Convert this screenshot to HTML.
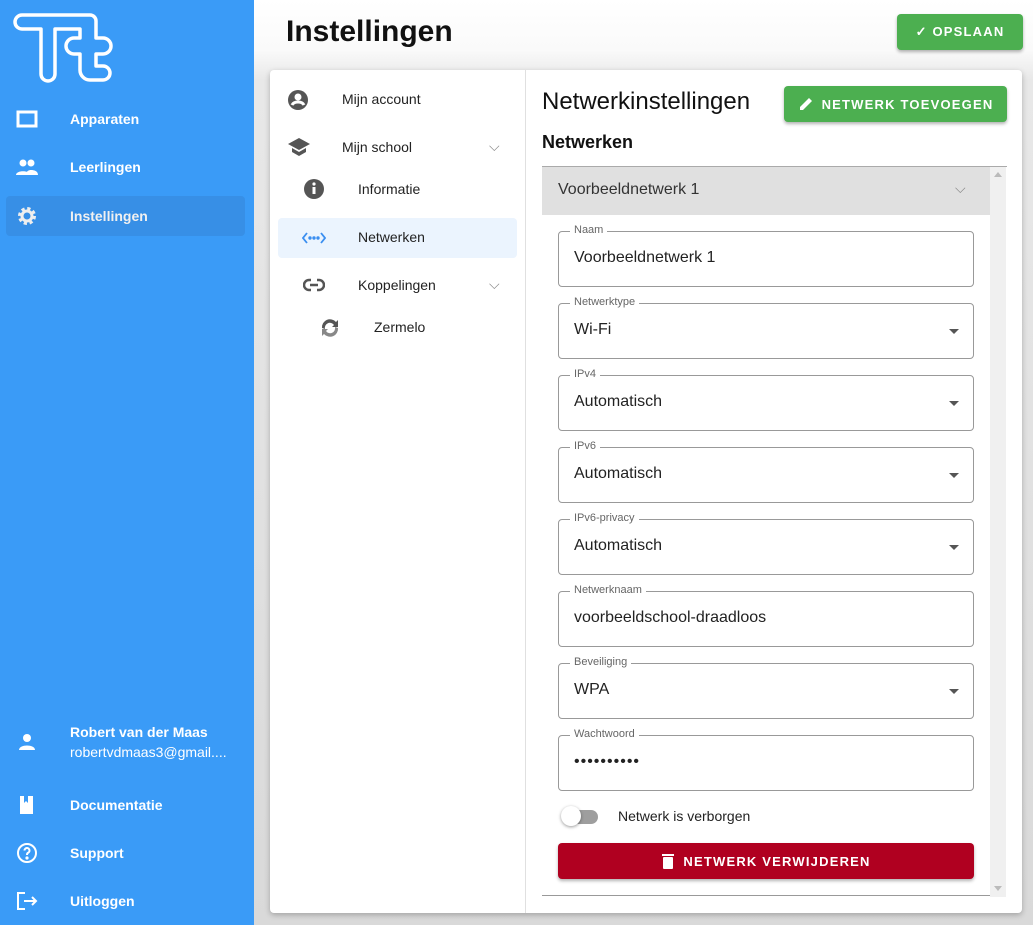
<!DOCTYPE html>
<html><head><meta charset="utf-8"><style>
*{box-sizing:border-box;margin:0;padding:0}
body{width:1033px;height:925px;overflow:hidden;font-family:"Liberation Sans",Roboto,sans-serif;background:#d9d9d9;position:relative}
.abs{position:absolute}
#side{left:0;top:0;width:254px;height:925px;background:#3a9bf7;color:#fff}
.nav{position:absolute;left:0;width:254px;height:40px;font-size:14px;font-weight:bold}
.nav span{position:absolute;left:70px;top:12px}
.nav svg{position:absolute;left:15px;top:8px}
#main{left:254px;top:0;width:779px;height:925px;background:linear-gradient(#fff 0,#fafafa 50px,#e8e8e8 80px,#d9d9d9 100%)}
h1{position:absolute;left:286px;top:15px;font-size:30px;font-weight:bold;color:#111}
.btn{position:absolute;background:#4caf50;color:#fff;font-weight:bold;font-size:13px;letter-spacing:1.2px;border-radius:4px;box-shadow:0 2px 3px rgba(0,0,0,.3);display:flex;align-items:center;justify-content:center;gap:8px}
#card{left:270px;top:70px;width:752px;height:843px;background:#fff;border-radius:4px;box-shadow:0 2px 6px rgba(0,0,0,.25)}
.mi{position:absolute;font-size:14px;color:#222}
.field{position:absolute;left:558px;width:416px;height:56px;border:1px solid #999;border-radius:4px}
.field label{position:absolute;left:11px;top:-8px;background:#fff;padding:0 4px;font-size:11px;color:#666}
.field div{position:absolute;left:15px;top:17px;font-size:16px;color:#222}
.field i{position:absolute;right:14px;top:25px;border-left:5px solid transparent;border-right:5px solid transparent;border-top:5px solid #555}
</style></head><body>
<div id="side" class="abs">
<svg class="abs" style="left:0;top:0" width="120" height="90" viewBox="0 0 120 90" fill="none" stroke="#fff" stroke-width="3.5" stroke-linejoin="round"><path d="M22 15H90a6 6 0 0 1 6 6V38H103a8 8 0 0 1 0 16H96V66H103a7 7 0 0 1 0 14H90a10 10 0 0 1-10-10V54H74a8 8 0 0 1 0-16H80V29H55V74a7 7 0 0 1-14 0V29H22a7 7 0 0 1 0-14Z"/></svg>
<div class="nav" style="top:99px"><svg width="24" height="24"><rect x="3" y="5" width="18" height="14" fill="none" stroke="#fff" stroke-width="3"/></svg><span>Apparaten</span></div>
<div class="nav" style="top:147px"><svg width="24" height="24" fill="#fff"><circle cx="8" cy="8" r="3.5"/><circle cx="16" cy="8" r="3.5"/><path d="M1 20c0-5 14-5 14 0zM11 20c0-4 3-5 5-5 3 0 7 1 7 5z"/></svg><span>Leerlingen</span></div>
<div class="nav" style="top:196px;left:6px;width:239px;background:#378fe6;border-radius:4px"><svg width="24" height="24" style="left:9px"><circle cx="12" cy="12" r="7" fill="none" stroke="#eee" stroke-width="4" stroke-dasharray="3 2.5"/><circle cx="12" cy="12" r="5" fill="none" stroke="#eee" stroke-width="3"/></svg><span style="left:64px;color:#f0f0f0">Instellingen</span></div>
<div class="nav" style="top:720px;height:50px"><svg width="24" height="24" style="top:10px" fill="#fff"><circle cx="12" cy="8" r="4"/><path d="M4 20c0-6 16-6 16 0z"/></svg><span style="top:4px">Robert van der Maas</span><span style="top:24px;font-weight:normal">robertvdmaas3@gmail....</span></div>
<div class="nav" style="top:785px"><svg width="24" height="24" fill="#fff"><path d="M5 3h13v18H5z"/><path d="M9 3h4v7l-2-2-2 2z" fill="#3a9bf7"/></svg><span>Documentatie</span></div>
<div class="nav" style="top:833px"><svg width="24" height="24" fill="none" stroke="#fff" stroke-width="2"><circle cx="12" cy="12" r="9"/><path d="M9.5 9.5a2.5 2.5 0 1 1 3.5 2.3c-1 .5-1 1-1 2.2"/><circle cx="12" cy="17" r=".6" fill="#fff"/></svg><span>Support</span></div>
<div class="nav" style="top:881px"><svg width="24" height="24" fill="none" stroke="#fff" stroke-width="2"><path d="M10 4H3v16h7M9 12h12M17 8l4 4-4 4"/></svg><span>Uitloggen</span></div>
</div>
<div id="main" class="abs"></div>
<h1>Instellingen</h1>
<div class="btn" style="left:897px;top:14px;width:126px;height:36px">✓ OPSLAAN</div>
<div id="card" class="abs"></div>
<div class="abs" style="left:525px;top:70px;width:1px;height:843px;background:#e0e0e0"></div>
<svg class="abs" style="left:286px;top:88px" width="24" height="24"><circle cx="12" cy="12" r="10" fill="#555"/><circle cx="12" cy="9" r="3.5" fill="#fff"/><path d="M6 17c2-4 10-4 12 0" stroke="#fff" stroke-width="3" fill="none"/></svg>
<div class="mi" style="left:342px;top:91px">Mijn account</div>
<svg class="abs" style="left:287px;top:137px" width="24" height="20" fill="#555"><path d="M1 7l11-6 11 6-11 6z"/><path d="M5 11v4l7 4 7-4v-4l-7 4z"/></svg>
<div class="mi" style="left:342px;top:139px">Mijn school</div>
<div class="mi" style="left:489px;top:138px;color:#888">⌵</div>
<svg class="abs" style="left:303px;top:178px" width="22" height="22"><circle cx="11" cy="11" r="10" fill="#555"/><rect x="9.5" y="9" width="3" height="7" fill="#fff"/><circle cx="11" cy="6" r="1.6" fill="#fff"/></svg>
<div class="mi" style="left:358px;top:181px">Informatie</div>
<div class="abs" style="left:278px;top:218px;width:239px;height:40px;background:#ebf4fe;border-radius:4px"></div>
<svg class="abs" style="left:302px;top:230px" width="24" height="16" fill="none" stroke="#3a8ef0" stroke-width="1.8"><path d="M5 3L1 8l4 5M19 3l4 5-4 5"/><circle cx="8" cy="8" r=".8" fill="#3a8ef0"/><circle cx="12" cy="8" r=".8" fill="#3a8ef0"/><circle cx="16" cy="8" r=".8" fill="#3a8ef0"/></svg>
<div class="mi" style="left:358px;top:229px">Netwerken</div>
<svg class="abs" style="left:303px;top:277px" width="22" height="16" fill="none" stroke="#555" stroke-width="2.5"><path d="M8 3H6a5 5 0 0 0 0 10h2M14 3h2a5 5 0 0 1 0 10h-2M7 8h8"/></svg>
<div class="mi" style="left:358px;top:277px">Koppelingen</div>
<div class="mi" style="left:489px;top:276px;color:#888">⌵</div>
<svg class="abs" style="left:318px;top:316px" width="24" height="24" fill="#555"><path d="M4 12a8 8 0 0 1 14-6l2-2v7h-6l2-2a5 5 0 0 0-9 4z"/><path d="M20 12a8 8 0 0 1-14 6l-2 2v-7h6l-2 2a5 5 0 0 0 9-4z" fill="#888"/></svg>
<div class="mi" style="left:374px;top:319px">Zermelo</div>
<div class="abs" style="left:542px;top:88px;font-size:24px;color:#111">Netwerkinstellingen</div>
<div class="btn" style="left:784px;top:86px;width:223px;height:36px"><svg width="16" height="16" fill="#fff"><path d="M2 14v-3l9-9 3 3-9 9z"/></svg>NETWERK TOEVOEGEN</div>
<div class="abs" style="left:542px;top:132px;font-size:18px;font-weight:bold;color:#111">Netwerken</div>
<div class="abs" style="left:542px;top:166px;width:465px;height:1px;background:#aaa"></div>
<div class="abs" style="left:542px;top:167px;width:448px;height:48px;background:#e0e0e0"></div>
<div class="abs" style="left:558px;top:181px;font-size:16px;color:#333">Voorbeeldnetwerk 1</div>
<div class="abs" style="left:955px;top:180px;font-size:14px;color:#888">⌵</div>
<div class="abs" style="left:990px;top:167px;width:16px;height:730px;background:#f0f0f0"></div>
<div class="abs" style="left:994px;top:172px;border-left:4px solid transparent;border-right:4px solid transparent;border-bottom:5px solid #bbb"></div>
<div class="abs" style="left:994px;top:886px;border-left:4px solid transparent;border-right:4px solid transparent;border-top:5px solid #bbb"></div>
<div class="field" style="top:231px"><label>Naam</label><div>Voorbeeldnetwerk 1</div></div>
<div class="field" style="top:303px"><label>Netwerktype</label><div>Wi-Fi</div><i></i></div>
<div class="field" style="top:375px"><label>IPv4</label><div>Automatisch</div><i></i></div>
<div class="field" style="top:447px"><label>IPv6</label><div>Automatisch</div><i></i></div>
<div class="field" style="top:519px"><label>IPv6-privacy</label><div>Automatisch</div><i></i></div>
<div class="field" style="top:591px"><label>Netwerknaam</label><div>voorbeeldschool-draadloos</div></div>
<div class="field" style="top:663px"><label>Beveiliging</label><div>WPA</div><i></i></div>
<div class="field" style="top:735px"><label>Wachtwoord</label><div style="letter-spacing:1px">••••••••••</div></div>
<div class="abs" style="left:564px;top:810px;width:34px;height:14px;border-radius:7px;background:#9e9e9e"></div>
<div class="abs" style="left:561px;top:806px;width:20px;height:20px;border-radius:50%;background:#fff;box-shadow:0 1px 3px rgba(0,0,0,.4)"></div>
<div class="abs" style="left:618px;top:808px;font-size:14px;color:#222">Netwerk is verborgen</div>
<div class="btn" style="left:558px;top:843px;width:416px;height:36px;background:#b00020"><svg width="14" height="16" fill="#fff"><rect x="2" y="4" width="10" height="12" rx="1"/><rect x="1" y="1" width="12" height="2"/></svg>NETWERK VERWIJDEREN</div>
<div class="abs" style="left:542px;top:895px;width:448px;height:1px;background:#999"></div>
</body></html>
